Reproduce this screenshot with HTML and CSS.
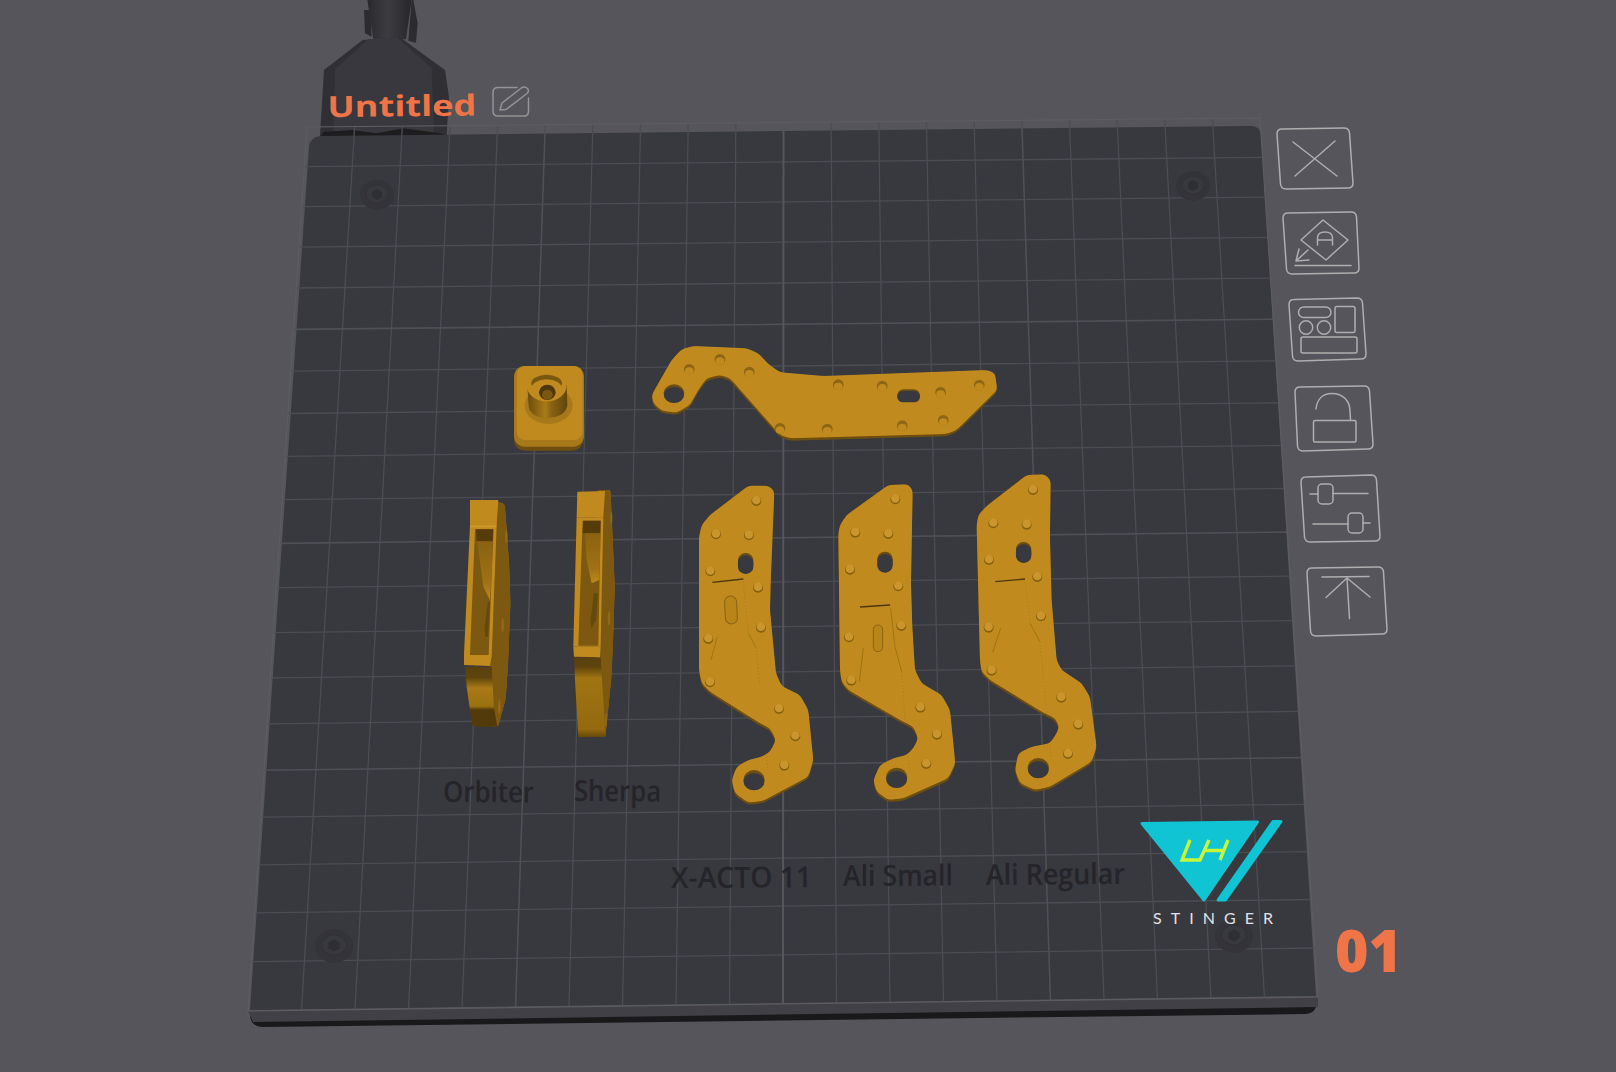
FILE: index.html
```html
<!DOCTYPE html>
<html lang="en">
<head>
<meta charset="utf-8">
<title>Untitled</title>
<link rel="stylesheet" href="styles.css">
</head>
<body>
<div class="stage">
<svg class="scene" width="1616" height="1072" viewBox="0 0 1616 1072" xmlns="http://www.w3.org/2000/svg">
  <defs>
    <filter id="round-gold" x="-5%" y="-5%" width="110%" height="110%" color-interpolation-filters="sRGB">
      <feGaussianBlur in="SourceAlpha" stdDeviation="8"/>
      <feComponentTransfer result="mask"><feFuncA type="linear" slope="7" intercept="-3"/></feComponentTransfer>
      <feFlood class="flood-gold"/>
      <feComposite in2="mask" operator="in"/>
    </filter>
    <filter id="round-dark" x="-5%" y="-5%" width="110%" height="110%" color-interpolation-filters="sRGB">
      <feGaussianBlur in="SourceAlpha" stdDeviation="8"/>
      <feComponentTransfer result="mask"><feFuncA type="linear" slope="7" intercept="-3"/></feComponentTransfer>
      <feFlood class="flood-dark"/>
      <feComposite in2="mask" operator="in"/>
    </filter>
    <filter id="round-side" x="-20%" y="-5%" width="140%" height="110%" color-interpolation-filters="sRGB">
      <feGaussianBlur in="SourceAlpha" stdDeviation="5"/>
      <feComponentTransfer result="mask"><feFuncA type="linear" slope="7" intercept="-3"/></feComponentTransfer>
      <feFlood class="flood-side"/>
      <feComposite in2="mask" operator="in"/>
    </filter>
    <linearGradient id="lowerA" x1="0" y1="0" x2="0" y2="1">
      <stop offset="0" stop-color="#5a400c"/><stop offset=".18" stop-color="#5f440c"/><stop offset=".36" stop-color="#a97a16"/><stop offset=".66" stop-color="#9a700f"/><stop offset=".72" stop-color="#523a0a"/><stop offset="1" stop-color="#523a0a"/>
    </linearGradient>
    <linearGradient id="lowerB" x1="0" y1="0" x2="0" y2="1">
      <stop offset="0" stop-color="#5a400c"/><stop offset=".12" stop-color="#5f440c"/><stop offset=".26" stop-color="#a07412"/><stop offset=".9" stop-color="#94690f"/><stop offset="1" stop-color="#644708"/>
    </linearGradient>
    <linearGradient id="innerG" x1="0" y1="0" x2="0" y2="1">
      <stop offset="0" stop-color="#8a6212"/><stop offset=".7" stop-color="#9e7213"/><stop offset="1" stop-color="#c08a1e"/>
    </linearGradient>
    <linearGradient id="cyl" x1="0" y1="0" x2="1" y2="0">
      <stop offset="0" stop-color="#6b4c0e"/><stop offset=".45" stop-color="#a87a16"/><stop offset=".6" stop-color="#8a6312"/><stop offset="1" stop-color="#5f440c"/>
    </linearGradient>
    <linearGradient id="tube" x1="0" y1="0" x2="1" y2="0">
      <stop offset="0" stop-color="#2a2a2e"/><stop offset=".45" stop-color="#3c3c41"/><stop offset="1" stop-color="#28282c"/>
    </linearGradient>
    <g id="bump">
      <circle class="bump-shade" cy="3" r="15"/>
      <circle class="bump-top" r="13"/>
    </g>
    <g id="pit">
      <circle class="pit-edge" r="16"/>
      <ellipse class="pit-floor" cy="5" rx="13" ry="11"/>
    </g>
    <g id="screw-a">
      <ellipse class="screw-ring" rx="17" ry="15"/>
      <ellipse class="screw-head" cy="-1" rx="11" ry="9"/>
      <polygon class="screw-hex" points="-5,-3 0,-6 5,-3 5,2 0,5 -5,2"/>
    </g>
  </defs>

  <!-- hotend behind the bed -->
  <g transform="translate(280 0) scale(.3333)">
    <polygon class="hot-dark" points="252,30 270,30 275,110 255,100"/>
    <polygon class="hot-dark" points="395,0 400,0 413,70 408,128 385,122"/>
    <polygon class="hot-tube" points="262,0 395,0 378,118 280,118"/>
    <polygon class="hot-side" points="248,120 360,112 495,210 507,290 500,405 120,408 132,210"/>
    <polygon class="hot-face" points="265,118 352,112 455,205 462,405 160,408 165,208"/>
    <polygon class="hot-black" points="124,408 130,396 215,390 290,400 370,385 470,398 500,405 500,412 124,412"/>
  </g>

  <!-- bed -->
  <path class="bed-bottom" d="M250 1016Q251 1026 262 1027L1306 1014Q1316 1013 1317 1003Z"/>
  <polygon class="bed-front" points="248,1011 1318,997 1318,1007 253,1022"/>
  <path class="bed-top" d="M321 136L1250 126Q1260 125.500 1261 135L1316 996L250 1010L309 147Q310 137 321 136Z"/>

  <!-- grid -->
  <g class="grid">
    <path d="M304.4 166.6L1262.6 157.4M301.7 206.6L1265.2 197.2M299 247.1L1267.9 237.4M296.3 288L1270.6 278.1M290.7 371.2L1276 360.8M287.9 413.5L1278.8 402.9M285 456.3L1281.6 445.5M282.1 499.6L1284.4 488.5M276.2 587.7L1290.2 576.1M273.3 632.6L1293.2 620.7M270.2 677.9L1296.1 665.8M267.2 723.8L1299.2 711.4M260.9 817.2L1305.3 804.3M257.8 864.8L1308.4 851.6M254.5 912.9L1311.6 899.5M251.3 961.7L1314.8 948"/>
    <path d="M354.65 126.55L301.5 1010.3M402.3 126.1L355 1009.6M450 125.65L408.5 1008.9M497.6 125.2L462 1008.2M592.9 124.3L569 1006.8M640.55 123.85L622.5 1006.1M688.2 123.4L676 1005.4M735.85 122.95L729.5 1004.7M831.15 122.05L836.5 1003.3M878.8 121.6L890 1002.6M926.45 121.15L943.5 1001.9M974.1 120.7L997 1001.2M1069.4 119.8L1104 999.8M1117.05 119.35L1157.5 999.1M1164.7 118.9L1211 998.4M1212.35 118.45L1264.5 997.7"/>
  </g>
  <g class="grid grid-fifth">
    <path d="M293.5 329.4L1273.3 319.2M279.2 543.4L1287.3 532.1M264.1 770.3L1302.2 757.6M545.25 124.75L515.5 1007.5M1021.75 120.25L1050.5 1000.5"/>
  </g>
  <g class="grid grid-major">
    <path d="M783.5 122.5L783 1004"/>
  </g>
  <polygon class="grid-outline" points="307,127 1260,118 1318,997 248,1011"/>

  <!-- screws -->
  <use href="#screw-a" transform="translate(377 195)"/>
  <use href="#screw-a" transform="translate(1193 186)"/>
  <use href="#screw-a" transform="translate(334 946) scale(1.12)"/>
  <use href="#screw-a" transform="translate(1234 936) scale(1.12)"/>

  <!-- printed labels -->
  <g class="label">
    <text x="443" y="802" textLength="91" lengthAdjust="spacingAndGlyphs" transform="rotate(.3 443 802)">Orbiter</text>
    <text x="574" y="801" textLength="87" lengthAdjust="spacingAndGlyphs" transform="rotate(.3 574 801)">Sherpa</text>
    <text x="671" y="888" textLength="141" lengthAdjust="spacingAndGlyphs" transform="rotate(-.3 671 888)">X-ACTO 11</text>
    <text x="843" y="886" textLength="110" lengthAdjust="spacingAndGlyphs" transform="rotate(-.3 843 886)">Ali Small</text>
    <text x="986" y="885" textLength="139" lengthAdjust="spacingAndGlyphs" transform="rotate(-.5 986 885)">Ali Regular</text>
  </g>

  <!-- knob -->
  <g transform="translate(490 340) scale(.3333)">
    <g filter="url(#round-dark)"><rect x="72" y="100" width="208" height="232" rx="30"/></g>
    <rect class="part-mid" x="72" y="78" width="210" height="242" rx="32"/>
    <rect class="part-body" x="80" y="78" width="198" height="222" rx="26"/>
    <ellipse class="part-mid" cx="176" cy="196" rx="72" ry="56"/>
    <path class="cyl" d="M112 140L116 200Q122 232 172 234Q226 232 232 196L230 135Z"/>
    <ellipse class="part-body" cx="170" cy="138" rx="60" ry="46"/>
    <ellipse class="part-deep" cx="170" cy="130" rx="46" ry="26"/>
    <ellipse class="part-body" cx="170" cy="146" rx="46" ry="28"/>
    <ellipse class="part-hole" cx="172" cy="157" rx="25" ry="23"/>
    <ellipse class="part-deep" cx="172" cy="164" rx="16" ry="15"/>
  </g>

  <!-- long plate -->
  <g transform="translate(490 340) scale(.3333)">
    <g filter="url(#round-dark)" transform="translate(0 7)">
      <polygon points="485,165 545,60 575,28 610,18 770,25 805,40 835,72 870,97 1000,108 1490,90 1515,98 1522,150 1400,270 1370,282 900,295 870,285 720,115 690,105 650,115 625,150 600,195 560,218 515,212 490,190"/>
    </g>
    <g filter="url(#round-gold)">
      <polygon points="485,165 545,60 575,28 610,18 770,25 805,40 835,72 870,97 1000,108 1490,90 1515,98 1522,150 1400,270 1370,282 900,295 870,285 720,115 690,105 650,115 625,150 600,195 560,218 515,212 490,190"/>
    </g>
    <ellipse class="part-hole-rim" cx="552" cy="160" rx="31" ry="27"/>
    <ellipse class="bed-hole" cx="552" cy="165" rx="30" ry="24"/>
    <rect class="part-hole-rim" x="1222" y="148" width="68" height="36" rx="18"/>
    <rect class="bed-hole" x="1222" y="153" width="68" height="34" rx="17"/>
    <use href="#pit" x="598" y="88"/><use href="#pit" x="690" y="58"/><use href="#pit" x="778" y="96"/>
    <use href="#pit" x="1045" y="134"/><use href="#pit" x="1177" y="138"/><use href="#pit" x="1352" y="157"/>
    <use href="#pit" x="1468" y="135"/><use href="#pit" x="870" y="265"/><use href="#pit" x="1012" y="267"/>
    <use href="#pit" x="1237" y="257"/><use href="#pit" x="1360" y="241"/>
  </g>

  <!-- side-on carriers -->
  <g transform="translate(440 480) scale(.3333)">
    <g filter="url(#round-side)"><polygon points="175,65 195,72 208,250 212,370 205,550 198,655 175,740 150,740 150,60"/></g>
    <ellipse class="side-pit" cx="199" cy="170" rx="4" ry="20"/>
    <ellipse class="side-pit" cx="188" cy="435" rx="4" ry="22"/>
    <ellipse class="side-pit" cx="178" cy="680" rx="4" ry="22"/>
    <path class="low-a" d="M75 560H155L162 685L172 740H108Q98 740 95 725L80 620Z"/>
    <polygon class="part-body" points="90,60 175,60 170,136 90,136"/>
    <polygon class="part-body" points="90,136 170,136 155,530 72,530 72,522"/>
    <polygon class="part-edge" points="90,136 170,136 168,142 90,142"/>
    <polygon class="side-dark" points="105,148 160,148 146,525 90,525"/>
    <polygon class="side-deep" points="108,148 160,148 159,183 110,183"/>
    <polygon class="inner" points="112,185 160,185 150,360 130,320"/>
    <polygon class="side-wedge" points="144,365 150,365 144,470 136,470 134,440"/>
    <polygon class="part-body" points="72,528 155,528 150,558 72,555"/>

    <g filter="url(#round-side)"><polygon points="495,30 512,28 520,200 525,320 520,480 515,590 497,770 470,770 470,30"/></g>
    <ellipse class="side-pit" cx="514" cy="115" rx="3" ry="20"/>
    <ellipse class="side-pit" cx="507" cy="415" rx="4" ry="22"/>
    <ellipse class="side-pit" cx="498" cy="720" rx="3" ry="20"/>
    <polygon class="low-b" points="403,532 482,532 497,770 415,772 405,600"/>
    <polygon class="part-body" points="412,35 495,33 490,112 410,112"/>
    <polygon class="part-body" points="410,112 490,112 482,500 400,500"/>
    <polygon class="side-dark" points="428,122 482,122 475,497 415,497"/>
    <polygon class="side-deep" points="430,122 482,122 481,160 428,160"/>
    <polygon class="inner" points="435,160 482,160 478,300 455,310 440,240"/>
    <polygon class="side-wedge" points="462,340 474,340 468,420 454,445 452,420"/>
    <polygon class="part-body" points="400,500 482,500 480,532 402,530"/>
  </g>

  <!-- three arms -->
  <g transform="translate(680 470) scale(.3333)">
    <g filter="url(#round-dark)" transform="translate(0 7)">
      <polygon points="57,200 65,165 90,135 205,47 265,47 283,62 272,340 270,420 288,610 305,648 360,675 385,720 400,870 385,920 250,992 205,998 165,970 155,930 170,890 205,870 245,860 270,845 288,810 270,775 240,760 90,665 65,640 57,600"/>
      <polygon points="475,190 480,165 500,135 625,45 685,43 698,60 693,340 697,470 705,600 725,640 785,675 810,720 826,880 805,925 670,985 625,990 590,965 580,930 600,885 640,865 680,855 700,835 715,805 700,770 660,750 505,660 485,635 480,600"/>
      <polygon points="890,165 895,135 920,108 1040,15 1095,13 1112,30 1110,200 1115,390 1130,570 1145,600 1205,640 1230,680 1250,830 1235,875 1110,950 1065,960 1020,940 1005,900 1015,850 1055,830 1110,820 1130,790 1138,770 1125,745 1085,725 930,630 905,605 900,570"/>
    </g>
    <g filter="url(#round-gold)">
      <polygon points="57,200 65,165 90,135 205,47 265,47 283,62 272,340 270,420 288,610 305,648 360,675 385,720 400,870 385,920 250,992 205,998 165,970 155,930 170,890 205,870 245,860 270,845 288,810 270,775 240,760 90,665 65,640 57,600"/>
      <polygon points="475,190 480,165 500,135 625,45 685,43 698,60 693,340 697,470 705,600 725,640 785,675 810,720 826,880 805,925 670,985 625,990 590,965 580,930 600,885 640,865 680,855 700,835 715,805 700,770 660,750 505,660 485,635 480,600"/>
      <polygon points="890,165 895,135 920,108 1040,15 1095,13 1112,30 1110,200 1115,390 1130,570 1145,600 1205,640 1230,680 1250,830 1235,875 1110,950 1065,960 1020,940 1005,900 1015,850 1055,830 1110,820 1130,790 1138,770 1125,745 1085,725 930,630 905,605 900,570"/>
    </g>

    <ellipse class="part-hole-rim" cx="222" cy="930" rx="32" ry="30"/>
    <ellipse class="bed-hole" cx="222" cy="935" rx="31" ry="26"/>
    <rect class="part-hole-rim" x="174" y="249" width="46" height="60" rx="22"/>
    <rect class="bed-hole" x="174" y="256" width="46" height="56" rx="22"/>

    <ellipse class="part-hole-rim" cx="650" cy="923" rx="32" ry="30"/>
    <ellipse class="bed-hole" cx="650" cy="928" rx="31" ry="26"/>
    <rect class="part-hole-rim" x="592" y="245" width="46" height="60" rx="22"/>
    <rect class="bed-hole" x="592" y="252" width="46" height="56" rx="22"/>

    <ellipse class="part-hole-rim" cx="1075" cy="894" rx="32" ry="30"/>
    <ellipse class="bed-hole" cx="1075" cy="899" rx="31" ry="26"/>
    <rect class="part-hole-rim" x="1008" y="216" width="46" height="60" rx="22"/>
    <rect class="bed-hole" x="1008" y="223" width="46" height="56" rx="22"/>

    <g class="score">
      <path d="M97 337L190 327M540 411L630 405M946 335L1035 327"/>
    </g>
    <g class="score-thin">
      <path d="M112 500L93 570M205 490L228 532M550 535L538 635M632 415L645 530L665 605M962 475L938 547M1050 460L1080 515"/>
    </g>
    <g class="score-dot">
      <path d="M190 335L205 490M228 532L240 645M258 860L263 895M665 605L675 750M685 860L688 900M1035 335L1050 460M1080 515L1100 730M1110 825L1113 860"/>
    </g>
    <rect class="slot-line" x="135" y="378" width="36" height="84" rx="18" transform="rotate(-3 153 420)"/>
    <rect class="slot-line" x="580" y="465" width="28" height="80" rx="14"/>

    <use href="#bump" x="229" y="90"/><use href="#bump" x="108" y="190"/><use href="#bump" x="207" y="193"/>
    <use href="#bump" x="91" y="301"/><use href="#bump" x="234" y="350"/><use href="#bump" x="243" y="470"/>
    <use href="#bump" x="85" y="504"/><use href="#bump" x="90" y="634"/><use href="#bump" x="297" y="714"/>
    <use href="#bump" x="346" y="796"/><use href="#bump" x="313" y="884"/>

    <use href="#bump" x="646" y="85"/><use href="#bump" x="526" y="185"/><use href="#bump" x="625" y="189"/>
    <use href="#bump" x="510" y="296"/><use href="#bump" x="655" y="346"/><use href="#bump" x="664" y="465"/>
    <use href="#bump" x="507" y="499"/><use href="#bump" x="514" y="629"/><use href="#bump" x="721" y="710"/>
    <use href="#bump" x="771" y="791"/><use href="#bump" x="739" y="879"/>

    <use href="#bump" x="1059" y="57"/><use href="#bump" x="940" y="157"/><use href="#bump" x="1040" y="161"/>
    <use href="#bump" x="927" y="267"/><use href="#bump" x="1072" y="318"/><use href="#bump" x="1083" y="436"/>
    <use href="#bump" x="926" y="470"/><use href="#bump" x="935" y="599"/><use href="#bump" x="1144" y="680"/>
    <use href="#bump" x="1195" y="761"/><use href="#bump" x="1164" y="849"/>
  </g>

  <!-- Stinger logo -->
  <g class="logo">
    <polygon class="logo-cyan" points="1142,823.5 1257.5,822 1204,900"/>
    <polygon class="logo-cyan" points="1273,821.5 1281,821.5 1225.5,900 1218,900"/>
    <path class="logo-mark" d="M1190 840L1182 860H1200L1209 840M1204.5 850.5H1224M1228 840L1220 860"/>
    <text class="logo-name" x="1153" y="924" textLength="120">STINGER</text>
  </g>

  <!-- title -->
  <text class="title" x="327.500" y="117" textLength="149" lengthAdjust="spacingAndGlyphs" transform="rotate(-.6 329 117)">Untitled</text>
  <g class="ico ico-soft">
    <path d="M517 87.500H498Q493 87.500 493 92.500V111Q493 116 498 116H524Q528.500 116 528.500 111V98"/>
    <path d="M500 110L502 103L522 87.500Q525 86 527.500 88.500Q529.500 91 527 93.500L506 109.500Z"/>
  </g>

  <!-- plate number -->
  <text class="plate-no" x="1335" y="972" textLength="67" lengthAdjust="spacingAndGlyphs">01</text>

  <!-- side toolbar -->
  <g class="ico">
    <path d="M1282 129L1344 128Q1349 128 1349.500 133L1353 183Q1353 188 1348 188L1286 189Q1281 189 1280.500 184L1277 134Q1277 129 1282 129Z"/>
    <path d="M1293 142L1337 176M1335 141L1295 176"/>

    <path d="M1288 213L1351 212Q1356 212 1356.500 217L1359 268Q1359 273 1354 273L1292 274Q1287 274 1286.500 269L1283 218Q1283 213 1288 213Z"/>
    <path d="M1323 220L1348 240L1326 260L1301 240Z"/>
    <path d="M1317.500 245V238Q1317.500 232 1325 232Q1332.500 232 1332.500 238V245M1317.500 240H1332.500"/>
    <path d="M1308 250L1296 261M1299 249L1296 261L1309 260M1295 265.500H1351"/>

    <path d="M1294 299.500L1357 298Q1362 298 1362.500 303L1366 354Q1366 359 1361 359L1298 361Q1293 361 1292.500 356L1289 304.500Q1289 299.500 1294 299.500Z"/>
    <rect x="1298.500" y="307" width="32.500" height="10.500" rx="5.200"/>
    <rect x="1335" y="306.500" width="20" height="26" rx="2"/>
    <circle cx="1306" cy="327.500" r="6.700"/>
    <circle cx="1324" cy="327.500" r="6.700"/>
    <rect x="1301" y="337" width="56" height="16" rx="2"/>

    <path d="M1300 387L1364 386Q1369 386 1369.500 391L1373 444Q1373 449 1368 449L1303 451Q1298 451 1297.500 446L1295 392Q1295 387 1300 387Z"/>
    <path d="M1316 409C1317 399 1323 393.500 1332 393.500C1343 393.500 1350 401 1350 411L1350.500 420"/>
    <rect x="1313.500" y="420.500" width="42.500" height="21.500" rx="1.500"/>

    <path d="M1306 477L1371 475Q1376 475 1376.500 480L1380 536Q1380 541 1375 541L1310 542Q1305 542 1304.500 537L1301 482Q1301 477 1306 477Z"/>
    <path d="M1310 494H1318M1333 493.500H1368M1313 524H1348M1363 523H1370"/>
    <rect x="1318" y="484" width="15" height="20" rx="4"/>
    <rect x="1348" y="513" width="15" height="20" rx="4"/>

    <path d="M1312 568L1378 567Q1383 567 1383.500 572L1387 629Q1387 634 1382 634L1316 636Q1311 636 1310.500 631L1307 573Q1307 568 1312 568Z"/>
    <path d="M1322 577L1369 576.500M1347 578L1349.500 618.500M1326 597.500L1347 578L1370 597"/>
  </g>
</svg>
</div>
</body>
</html>
```

FILE: styles.css
```css
html, body {
  margin: 0;
  padding: 0;
  background: #55555b;
}
.stage {
  width: 1616px;
  height: 1072px;
  overflow: hidden;
}
.scene {
  display: block;
}

/* hotend */
.hot-dark { fill: #2c2c30; }
.hot-tube { fill: url(#tube); }
.hot-side { fill: #2f2f34; }
.hot-face { fill: #38383e; }
.hot-black { fill: #1d1d20; }

/* bed */
.bed-top { fill: #38383f; }
.bed-front { fill: #404046; }
.bed-bottom { fill: #19191c; }
.grid { fill: none; stroke: #4c4c53; stroke-width: 1.3; }
.grid-fifth { stroke: #4f4f56; stroke-width: 1.6; }
.grid-major { stroke: #55555c; stroke-width: 2; }
.grid-outline { fill: none; stroke: #5c5c62; stroke-width: 1.2; }

.screw-ring { fill: #333339; }
.screw-head { fill: #38383f; stroke: #313137; stroke-width: 1; }
.screw-hex { fill: #2e2e33; }

.label text {
  font-family: "Open Sans", "Noto Sans", sans-serif;
  font-size: 29px;
  font-weight: 600;
  fill: #242429;
}

/* printed parts */
.flood-gold { flood-color: #c08a1e; }
.flood-dark { flood-color: #6e4e0f; }
.flood-side { flood-color: #7c5810; }
.part-body { fill: #c08a1e; }
.part-mid { fill: #a8791a; }
.part-edge { fill: #d09a2a; }
.part-deep { fill: #7a5710; }
.part-hole { fill: #4e3709; }
.part-hole-rim { fill: #6e4e0f; }
.bed-hole { fill: #38383f; }
.cyl { fill: url(#cyl); }
.side-dark { fill: #7c5810; }
.side-deep { fill: #553c0a; }
.side-wedge { fill: #64480c; }
.side-pit { fill: #94690f; }
.inner { fill: url(#innerG); }
.low-a { fill: url(#lowerA); }
.low-b { fill: url(#lowerB); }
.bump-shade { fill: #86600f; }
.bump-top { fill: #c9952c; }
.pit-edge { fill: #8d6514; }
.pit-floor { fill: #c08a1e; }
.score { fill: none; stroke: #4e3709; stroke-width: 4; }
.score-thin { fill: none; stroke: #98700f; stroke-width: 2.500; }
.score-dot { fill: none; stroke: #ab7c18; stroke-width: 2.500; stroke-dasharray: 4 6; }
.slot-line { fill: #b98418; stroke: #8a6312; stroke-width: 3; }

/* logo */
.logo-cyan { fill: #10c4d4; stroke: #10c4d4; stroke-width: 3; stroke-linejoin: round; }
.logo-mark { fill: none; stroke: #c6f53a; stroke-width: 3.400; }
.logo-name {
  font-family: "Lato", "Open Sans", sans-serif;
  font-size: 16px;
  font-weight: 400;
  fill: #e2e2e4;
}

/* overlay text */
.title {
  font-family: "Open Sans", "Noto Sans", sans-serif;
  font-size: 29px;
  font-weight: 700;
  fill: #ef7548;
}
.plate-no {
  font-family: "Open Sans", "Noto Sans", sans-serif;
  font-size: 58px;
  font-weight: 800;
  fill: #ef7548;
}

/* toolbar icons */
.ico { fill: none; stroke: #aeaeb0; stroke-width: 1.5; stroke-linecap: round; stroke-linejoin: round; }
.ico-soft { stroke: #949497; }
```
